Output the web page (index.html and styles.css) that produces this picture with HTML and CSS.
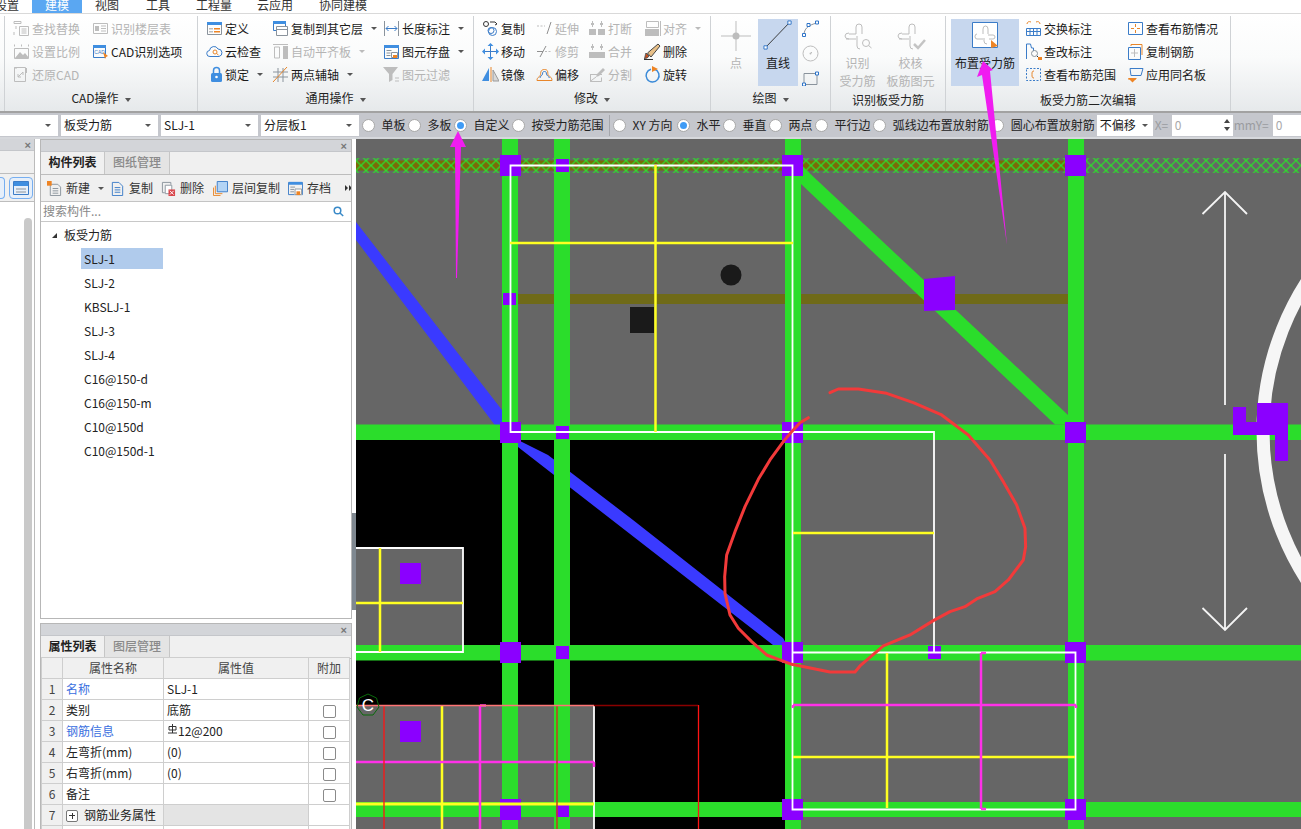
FILE: index.html
```html
<!DOCTYPE html>
<html lang="zh-CN">
<head>
<meta charset="utf-8">
<title>板受力筋</title>
<link rel="stylesheet" href="styles.css">
</head>
<body>
<div class="app">
  <nav class="menu">
    <span class="m m0">设置</span><span class="m m1 on">建模</span><span class="m m2">视图</span><span class="m m3">工具</span><span class="m m4">工程量</span><span class="m m5">云应用</span><span class="m m6">协同建模</span>
  </nav>

  <div class="ribbon">
    <section class="group g1">
      <div class="gbody">
        <div class="col c1a">
          <div class="tool off"><svg class="ic" viewBox="0 0 17 17"><path class="g" d="M1 1.500h7v2H1zM6.500 6.500h9v9h-9zM8.500 9h5M8.500 11h5M8.500 13h5M3 6v3M1 12v3"/></svg>查找替换</div>
          <div class="tool off"><svg class="ic" viewBox="0 0 17 17"><path class="g" d="M1.500 1.500v2M15.500 1.500v2M8.500 1.500v2"/><path class="g" d="M1.500 5.500h14v10h-14z"/><path class="gf" d="M2 15l5-6 3 3 2-2 4 5z"/></svg>设置比例</div>
          <div class="tool off"><svg class="ic" viewBox="0 0 17 17"><path class="g" d="M1.500 1.500h11v14h-11zM13.500 2v5M1 2h3M5 11l5-5M5 8v3h3M10 6v3"/></svg>还原CAD</div>
        </div>
        <div class="col">
          <div class="tool off"><svg class="ic" viewBox="0 0 17 17"><path class="g" d="M1.500 3.500h14v10h-14z"/><path class="gf" d="M3 6h4v5H3z"/><path class="g" d="M9 6h5M9 8.500h5M9 11h5"/></svg>识别楼层表</div>
          <div class="tool"><svg class="ic" viewBox="0 0 17 17"><path class="bl" d="M1.500 2.500h12v12h-12z"/><path class="bf" d="M1 2h13v3H1z"/><text class="tiny" x="2.300" y="11">CAD</text><path class="of" d="M11 9l5 4-2 1-1 2z"/></svg>CAD识别选项</div>
        </div>
      </div>
      <h4 class="gt">CAD操作<i class="caret wide"></i></h4>
    </section>

    <section class="group g2">
      <div class="gbody">
        <div class="col c2a">
          <div class="tool"><svg class="ic" viewBox="0 0 17 17"><path class="ln" d="M1.500 2.500h14v12h-14z"/><path class="bf" d="M1 2h15v3H1z"/><path class="of" d="M8 8h6v1.500H8zM8 11h6v1.500H8z"/><path class="gf" d="M3 8h4v1.500H3zM3 11h4v1.500H3z"/></svg>定义</div>
          <div class="tool"><svg class="ic" viewBox="0 0 17 17"><path class="bl" d="M4 13.500a3 3 0 0 1-.5-6 4.500 4.500 0 0 1 8.500-1.500 3.800 3.800 0 0 1 1 7.500z"/><circle class="or" cx="9" cy="9" r="2"/><path class="or" d="M10.500 10.500l2 1.500"/></svg>云检查</div>
          <div class="tool ind"><svg class="ic n" viewBox="0 0 13 17"><path class="lk" d="M3.500 7V4.500a3 3 0 0 1 6 0V7"/><rect class="bf" x="1" y="7" width="11" height="9" rx="1.500"/><circle class="wf" cx="6.500" cy="11" r="1.300"/></svg>锁定<i class="caret"></i></div>
        </div>
        <div class="col c2b">
          <div class="tool"><svg class="ic" viewBox="0 0 17 17"><path class="bl" d="M1.500 1.500h12v9h-12z"/><path class="bf" d="M1 1h13v3H1z"/><path class="wf" d="M4 6h12v10H4z"/><path class="ln" d="M4.500 6.500h11v9h-11zM4.500 9.500h11"/></svg>复制到其它层<i class="caret"></i></div>
          <div class="tool off"><svg class="ic" viewBox="0 0 17 17"><path class="g" d="M1 1.500h15M2.500 4v11h5V4z"/><path class="gf" d="M11 3h5v13h-5z"/></svg>自动平齐板<i class="caret dim"></i></div>
          <div class="tool"><svg class="ic" viewBox="0 0 17 17"><path class="ln" d="M1 6h15M1 11h15M6 2v14M11 2v14"/><path class="or" d="M1 16L15 1"/></svg>两点辅轴<i class="caret"></i></div>
        </div>
        <div class="col">
          <div class="tool"><svg class="ic" viewBox="0 0 17 17"><path class="ln" d="M1.500 1v15M15.500 1v15"/><path class="bl" d="M3 8.500h11M5.500 6L3 8.500 5.500 11M11.500 6L14 8.500 11.500 11"/></svg>长度标注<i class="caret"></i></div>
          <div class="tool"><svg class="ic" viewBox="0 0 17 17"><path class="bl" d="M1.500 2.500h14v13h-14z"/><path class="bf" d="M1 2h15v3H1z"/><path class="ln" d="M3.500 7.500h5M3.500 10h4M3.500 12.500h4"/><path class="wf" d="M8 9h7v6H8z"/><path class="ln" d="M8.500 9.500h6v5h-6z"/><path class="of" d="M10 12h4v3h-4z"/></svg>图元存盘<i class="caret"></i></div>
          <div class="tool off"><svg class="ic" viewBox="0 0 17 17"><path class="gf" d="M0 1h15L9.500 8v6L6 16V8z"/><path class="g" d="M12 12h4M12 15h4"/></svg>图元过滤</div>
        </div>
      </div>
      <h4 class="gt">通用操作<i class="caret wide"></i></h4>
    </section>

    <section class="group g3">
      <div class="gbody">
        <div class="col c3a">
          <div class="tool"><svg class="ic" viewBox="0 0 17 17"><circle class="dk" cx="4" cy="4" r="2.500"/><path class="dk" d="M8 2h5l2 2-2 1"/><circle class="bl" cx="10.500" cy="11.500" r="4"/><circle class="bl" cx="9" cy="10.500" r="3"/></svg>复制</div>
          <div class="tool"><svg class="ic" viewBox="0 0 17 17"><path class="bl" d="M8.500 3v11M3 8.500h11"/><path class="bf" d="M8.500 0l3 3h-6zM8.500 17l-3-3h6zM0 8.500l3-3v6zM17 8.500l-3 3v-6z"/></svg>移动</div>
          <div class="tool"><svg class="ic" viewBox="0 0 17 17"><path class="bf" d="M7 2v13H0z"/><path class="gf2" d="M11 4v11h6z"/><path class="or" d="M9 1v15"/></svg>镜像</div>
        </div>
        <div class="col c3b">
          <div class="tool off"><svg class="ic" viewBox="0 0 17 17"><path class="g dash" d="M1 6h8"/><path class="gd" d="M11 14L15 2"/></svg>延伸</div>
          <div class="tool off"><svg class="ic" viewBox="0 0 17 17"><path class="gd" d="M1 8.500h6M4 14L10 3"/><path class="g dash" d="M9 8.500h7"/></svg>修剪</div>
          <div class="tool"><svg class="ic" viewBox="0 0 17 17"><path class="or" d="M1 14.500c0-4 3-3 3.500-6 .3-2 0-5 4-5s3 3 3.500 5c.5 2 4 2 4 6z"/><path class="bl" d="M4 12c0-2 2-2 2.500-4 .3-1.500 0-2.500 2-2.500s1.500 1 2 2.500c.5 2 2 2 3 4"/></svg>偏移</div>
        </div>
        <div class="col c3c">
          <div class="tool off"><svg class="ic" viewBox="0 0 17 17"><path class="gf" d="M0 9h7v6H0zM9 9h7v6H9zM2 3h3v2H2zM11 3h3v2h-3z"/><path class="g" d="M3.500 1v6M12.500 1v6"/></svg>打断</div>
          <div class="tool off"><svg class="ic" viewBox="0 0 17 17"><path class="gf" d="M0 9h16v6H0zM2 3h3v2H2zM11 3h3v2h-3z"/><path class="g" d="M3.500 1v6M12.500 1v6"/></svg>合并</div>
          <div class="tool off"><svg class="ic" viewBox="0 0 17 17"><path class="g" d="M1 8.500h12M1.500 8.500v7h11v-4M1 15.500L7 11"/><path class="gf" d="M8 8l6-6 2 2-6 6-3 1z"/></svg>分割</div>
        </div>
        <div class="col">
          <div class="tool off"><svg class="ic" viewBox="0 0 17 17"><path class="g" d="M2.500 1.500h12v6h-12z"/><path class="gf" d="M1 9h14v7H1z"/><path class="g" d="M16.500 1v15"/></svg>对齐<i class="caret dim"></i></div>
          <div class="tool"><svg class="ic" viewBox="0 0 17 17"><path class="dk" d="M0 16.500h9"/><path class="of2" d="M2 10l3 3c-1 2-3 2.500-5 2.500 1.500-1 1-4 2-5.500z"/><path class="tan" d="M3.500 10L14 1l2 2-9 11z"/></svg>删除</div>
          <div class="tool"><svg class="ic" viewBox="0 0 17 17"><path class="blt" d="M7 3.200a6.500 6.500 0 1 0 3.500.1"/><path class="of" d="M8 0l6 3-6 3z"/></svg>旋转</div>
        </div>
      </div>
      <h4 class="gt">修改<i class="caret wide"></i></h4>
    </section>

    <section class="group g4">
      <div class="gbody">
        <div class="big dot off"><svg class="bigic" viewBox="0 0 30 30"><path class="g" d="M0 15h30M15 0v30"/><circle class="gf" cx="15" cy="15" r="3.500"/></svg><span>点</span></div>
        <div class="big line on"><svg class="bigic" viewBox="0 0 30 32"><path class="dk" d="M2 29L27 3"/><path class="sq" d="M0 27.500h3.500V31H0zM25.500 1H29v3.500h-3.500z"/></svg><span>直线</span></div>
        <div class="mini">
          <svg class="ic" viewBox="0 0 17 17"><path class="ln" d="M2 15c0-6 4-10 13-12"/><path class="sq" d="M.5 13.500h3v3h-3zM5 3.500h3v3H5zM13.500 1h3v3h-3z"/></svg>
          <svg class="ic" viewBox="0 0 17 17"><circle class="g" cx="8.500" cy="8.500" r="7.500"/><path class="g" d="M10 7l-1 1"/><circle class="gf" cx="8.500" cy="8.500" r="1"/></svg>
          <svg class="ic" viewBox="0 0 17 17"><path class="ln" d="M2 4.500h13v11H2z"/><path class="sq" d="M.5 14h3v3h-3zM13.500 3h3v3h-3z"/></svg>
        </div>
      </div>
      <h4 class="gt">绘图<i class="caret wide"></i></h4>
    </section>

    <section class="group g5">
      <div class="gbody">
        <div class="big rec off"><svg class="bigic" viewBox="0 0 30 30"><path class="g" d="M13 12V5q0-3 3-3t3 3v7M3 17h10M6 11q-4 0-4 3t4 3M13 12h-7M14 14v10q0 3 3 3"/><circle class="g" cx="23" cy="21" r="3.500"/><path class="g" d="M25.500 23.500l3 2.500"/></svg><span>识别<br>受力筋</span></div>
        <div class="big rec off"><svg class="bigic" viewBox="0 0 30 30"><path class="g" d="M13 12V5q0-3 3-3t3 3v7M3 17h10M6 11q-4 0-4 3t4 3M13 12h-7M14 14v10q0 3 3 3"/><path class="gd2" d="M18 22l4 4 7-8"/></svg><span>校核<br>板筋图元</span></div>
      </div>
      <h4 class="gt plain">识别板受力筋</h4>
    </section>

    <section class="group g6">
      <div class="gbody">
        <div class="big place on"><svg class="bigic fr" viewBox="0 0 26 26"><path class="frame" d="M.5.500h25v25H.500z"/><path class="g" d="M11 12V7q0-3 2.500-3T16 7v5M5 12q-2 0-2 2.500T5 17h6M16 13h5q2 0 2 2t-2 2h-4M12 16v3q0 3 3 3"/><path class="of" d="M19 18l7 6-7 2z"/></svg><span>布置受力筋</span></div>
        <div class="col c6a">
          <div class="tool"><svg class="ic" viewBox="0 0 17 17"><path class="or" d="M2 4c0-2 2-3 4-2M15 4c0-2-2-3-4-2"/><path class="bl" d="M1.500 8.500h14v7h-14zM1.500 11.500h14M5 8.500v7M8.500 8.500v7M12 8.500v7"/></svg>交换标注</div>
          <div class="tool"><svg class="ic" viewBox="0 0 17 17"><path class="bl" d="M1.500 1h4l1 4h2v3M1.500 1v15"/><circle class="ln" cx="9.500" cy="10.500" r="3"/><path class="dk" d="M12 13l2 2"/><path class="of" d="M13 14h4v3h-4z"/></svg>查改标注</div>
          <div class="tool"><svg class="ic" viewBox="0 0 17 17"><path class="bl dash" d="M1.500 2.500h14v12h-14z"/><path class="or" d="M9 5c-2 0-2 1-2 3.500S7 12 9 12"/></svg>查看布筋范围</div>
        </div>
        <div class="col">
          <div class="tool"><svg class="ic" viewBox="0 0 17 17"><path class="bl" d="M1.500 2.500h14v12h-14z"/><path class="or" d="M8.500 4v3M8.500 10v3M4 8.500h3M10 8.500h3"/></svg>查看布筋情况</div>
          <div class="tool"><svg class="ic" viewBox="0 0 17 17"><path class="or" d="M4 3V1.500h11V12"/><path class="bl" d="M1.500 4.500h12v12h-12z"/><path class="g" d="M7.500 6v8M4 10h7"/></svg>复制钢筋</div>
          <div class="tool"><svg class="ic" viewBox="0 0 17 17"><path class="bl" d="M3 2.500h13l-2 7H4z"/><path class="or" d="M1 13h8"/><path class="of" d="M1 12h9l-4.500 4.500z"/></svg>应用同名板</div>
        </div>
      </div>
      <h4 class="gt plain">板受力筋二次编辑</h4>
    </section>
  </div>

  <div class="optbar">
    <div class="sel s0"><i class="caret"></i></div>
    <div class="sel s1">板受力筋<i class="caret"></i></div>
    <div class="sel s1">SLJ-1<i class="caret"></i></div>
    <div class="sel s2">分层板1<i class="caret"></i></div>
    <div class="opts">
      <label class="opt"><i class="radio"></i>单板</label>
      <label class="opt"><i class="radio"></i>多板</label>
      <label class="opt"><i class="radio sel-on"></i>自定义</label>
      <label class="opt"><i class="radio"></i>按受力筋范围</label>
      <span class="vsep"></span>
      <label class="opt xy"><i class="radio"></i><span class="xyt">XY 方向</span></label>
      <label class="opt"><i class="radio sel-on"></i>水平</label>
      <label class="opt"><i class="radio"></i>垂直</label>
      <label class="opt"><i class="radio"></i>两点</label>
      <label class="opt"><i class="radio"></i>平行边</label>
      <label class="opt"><i class="radio"></i>弧线边布置放射筋</label>
      <label class="opt"><i class="radio"></i>圆心布置放射筋</label>
    </div>
    <div class="sel s3">不偏移<i class="caret"></i></div>
    <span class="lab lx">X=</span>
    <div class="num nx">0<span class="spin"><i class="up"></i><i class="dn"></i></span></div>
    <span class="lab ly">mmY=</span>
    <div class="num ny">0</div>
  </div>

  <div class="main">
    <aside class="sliver">
      <div class="phead short"><span class="x">×</span></div>
      <div class="stabs"></div>
      <div class="stool"><i class="sb a"></i><i class="sb b"><svg viewBox="0 0 16 14" class="sbi"><path class="bl" d="M.5.500h15v13H.500z"/><path class="bf" d="M1 1h14v4H1z"/><path class="ln" d="M3 8h10M3 11h10"/></svg></i></div>
      <div class="sscroll"><i class="thumb"></i></div>
    </aside>

    <div class="panels">
      <section class="panel top">
        <div class="phead"><span class="x">×</span></div>
        <div class="tabs"><span class="tab act">构件列表</span><span class="tab">图纸管理</span></div>
        <div class="ptool">
          <span class="pt t1"><svg class="pi" viewBox="0 0 16 16"><path class="ln" d="M3.500 3.500h8l3 3v9h-11z"/><path class="ln" d="M6 8h6M6 10.500h6M6 13h6"/><path class="of" d="M0 0h5v5H0z"/></svg>新建<i class="caret"></i></span>
          <span class="pt t2"><svg class="pi" viewBox="0 0 16 16"><path class="bl" d="M2.500 1.500h7l4 4v10h-11z"/><path class="bl" d="M5 7h6M5 9.500h6M5 12h6"/></svg>复制</span>
          <span class="pt t3"><svg class="pi" viewBox="0 0 16 16"><path class="ln" d="M1.500 1.500h9v11h-9z"/><path class="wf" d="M4 4h8v10H4z"/><path class="ln" d="M4.500 4.500h7v9h-7z"/><path class="rf" d="M8 9h7v7H8z"/><path class="wl" d="M9.500 10.500l4 4M13.500 10.500l-4 4"/></svg>删除</span>
          <span class="pt t4"><svg class="pi" viewBox="0 0 16 16"><path class="or" d="M.5 7v8.500H8M2.500 5v8.500H10"/><path class="sky" d="M4.500.5h11v11h-11z"/></svg>层间复制</span>
          <span class="pt t5"><svg class="pi" viewBox="0 0 16 16"><path class="bl" d="M.5 1.500h15v13H.5z"/><path class="bf" d="M1 1h14v3H1z"/><path class="ln" d="M2.500 6.500h5M2.500 9h4M2.500 11.500h4"/><path class="wf" d="M7 8h8v7H7z"/><path class="ln" d="M7.500 8.500h7v6h-7z"/><path class="of" d="M9 11h4v4H9z"/></svg>存档</span>
          <span class="more"></span>
        </div>
        <div class="search"><span>搜索构件...</span><svg class="mag" viewBox="0 0 11 11"><circle class="blk" cx="4.500" cy="4.500" r="3.300"/><path class="blk" d="M7 7l3.200 3"/></svg></div>
        <div class="tree">
          <div class="root"><i class="tri"></i>板受力筋</div>
          <div class="leaf cur">SLJ-1</div>
          <div class="leaf">SLJ-2</div>
          <div class="leaf">KBSLJ-1</div>
          <div class="leaf">SLJ-3</div>
          <div class="leaf">SLJ-4</div>
          <div class="leaf">C16@150-d</div>
          <div class="leaf">C16@150-m</div>
          <div class="leaf">C10@150d</div>
          <div class="leaf">C10@150d-1</div>
        </div>
      </section>

      <section class="panel bottom">
        <div class="phead"><span class="x">×</span></div>
        <div class="tabs"><span class="tab act">属性列表</span><span class="tab">图层管理</span></div>
        <table class="props">
          <colgroup><col class="k0"><col class="k1"><col class="k2"><col class="k3"></colgroup>
          <thead><tr><th></th><th>属性名称</th><th>属性值</th><th>附加</th></tr></thead>
          <tbody>
            <tr><td class="n">1</td><td class="link">名称</td><td>SLJ-1</td><td></td></tr>
            <tr><td class="n">2</td><td>类别</td><td>底筋</td><td><i class="chk"></i></td></tr>
            <tr><td class="n">3</td><td class="link">钢筋信息</td><td><svg class="rebar" viewBox="0 0 9 10"><path class="dk" d="M4.500 0v9M1 2.500h7v3.500H1zM0 9h9"/></svg>12@200</td><td><i class="chk"></i></td></tr>
            <tr><td class="n">4</td><td>左弯折(mm)</td><td>(0)</td><td><i class="chk"></i></td></tr>
            <tr><td class="n">5</td><td>右弯折(mm)</td><td>(0)</td><td><i class="chk"></i></td></tr>
            <tr><td class="n">6</td><td>备注</td><td></td><td><i class="chk"></i></td></tr>
            <tr><td class="n">7</td><td class="grp"><i class="plus"></i>钢筋业务属性</td><td class="fill"></td><td></td></tr>
            <tr><td class="n"></td><td></td><td></td><td></td></tr>
          </tbody>
        </table>
      </section>
    </div>

    <div class="split"><i class="grip"></i></div>

    <div class="canvas">
      <svg class="draw" viewBox="356 139 945 690">
        <defs>
          <pattern id="hatch" width="10" height="10" patternUnits="userSpaceOnUse" x="356" y="160.500">
            <path class="hx" d="M0 0L10 10M10 0L0 10"/>
          </pattern>
        </defs>
        <rect class="cv-gray" x="356" y="139" width="945" height="690"/>
        <path class="cv-black" d="M356 440H786V829H356z"/>
        <path class="cv-gray" d="M356 548H463V652H356zM356 705H594V829H356z"/>

        <path class="ochre" d="M356 160.500H1068V170.500H356z"/>
        <rect class="hbar" x="356" y="158" width="945" height="15" fill="url(#hatch)"/>
        <path class="olive" d="M510 294H1068V304H510z"/>
        <path class="blue" d="M356 222L502 410 520 441 548 455 633 520 783 638 790 650 773 645 612 520 518 447 500 432 356 240z"/>

        <path class="beam" d="M502 139H518V829H502zM554 139H570V829H554zM785 139H801V829H785zM1068 139H1084V829H1068zM356 424.500H1301V440H356zM356 645H1301V660.500H356zM356 802H1301V817H356z"/>
        <path class="beam" d="M801 167L803 167 1068 415V424.500H1055L801 184z"/>

        <circle class="ring" cx="1538" cy="431" r="275"/>

        <path class="pur" d="M500 155h21v21h-21zM782 155h21v21h-21zM1065 155h21v21h-21zM500 422h21v21h-21zM782 422h21v21h-21zM1065 422h21v21h-21zM500 642h21v21h-21zM782 642h21v21h-21zM1065 642h21v21h-21zM500 799h21v21h-21zM782 799h21v21h-21zM1065 799h21v21h-21z"/>
        <path class="pur" d="M556 159h13v13h-13zM503 293h13v12h-13zM556 426h13v13h-13zM556 646h13v13h-13zM556 805h13v12h-13zM928 646h13v13h-13z"/>
        <path class="pur" d="M924 279L955 276V310L924 311zM400 563h21v21h-21zM400 721h21v21h-21zM1233 407H1246V422H1257V403H1288V461H1275V435H1233z"/>

        <path class="dark" d="M630 307h24v26h-24z"/>
        <circle class="dark" cx="731" cy="275" r="10.500"/>

        <path class="arrow" d="M1225 405V192M1202.500 214L1225 192 1247 214M1225 454V630M1202.500 608L1225 630 1247 608"/>

        <path class="wire" d="M510.500 165.500H792.500V432H510.500zM792.500 432H934V652M792.500 432V810M792.500 652.500H1075.500V809.500H792.500zM356 548H463V652H356M594 705V829"/>
        <path class="yel" d="M510 243H793M655.500 165V432M793 533H934M887 653V808M793 757H1075M380 548V652M356 603H463M442 706V829"/>
        <path class="yel thick" d="M356 804H594"/>
        <path class="mag-l" d="M981 653V809M793 705H1076M480 706V829M356 762H594M793 705v3M1076 705v3M981 653h5M981 809h5M480 705.500h6M594 762v5"/>
        <path class="red" d="M384 705V829M698.500 705V829"/>
        <path class="red-d" d="M557 705V829"/>
        <path class="maroon" d="M594 705.500H698"/>
        <path class="pink" d="M356 705.500H594"/>

        <path class="cir" d="M368 694L376.500 698 379 707 373 715 363 715 357 707 359.500 698z"/>
        <text class="c-mark" x="368" y="711">C</text>

        <g transform="translate(720 380) scale(.3333)">
          <path class="scrib" d="M265 113L240 128 215 155 190 185 150 240 115 298 75 380 45 455 20 525 14 590 15 640 30 705 55 745 95 785 140 825 215 853 330 876 405 876 420 858 490 798 570 765 640 722 690 695 735 680 770 657 825 635 865 600 910 540 917 500 915 445 890 375 850 305 810 240 745 165 665 105 580 68 500 40 415 27 355 27 330 38"/>
        </g>
      </svg>
    </div>
  </div>

  <svg class="over" viewBox="0 0 1301 829">
    <path class="anno" d="M458 131L466 147H461L457 278H456L455 147H450z"/>
    <path class="anno" d="M983 61L993 70 990 71 1007 245 982 75 977 77z"/>
  </svg>
</div>
</body>
</html>
```

FILE: styles.css
```css
* { box-sizing: border-box; }
html, body { margin: 0; padding: 0; background: #fff; }
body { font: 12px/16px "Noto Sans CJK SC", "Liberation Sans", sans-serif; color: #1a1a1a; }
i { font-style: normal; display: inline-block; }
h4 { margin: 0; font-weight: 400; font-size: 12px; }

.app { position: relative; width: 1301px; height: 829px; overflow: hidden; display: flex; flex-direction: column; }

/* menu */
.menu { height: 14px; flex: none; display: flex; background: #fff; border-bottom: 1px solid #d9d9d9; overflow: hidden; font-size: 12px; line-height: 10px; color: #333; }
.m { display: block; flex: none; height: 13px; text-align: center; white-space: nowrap; }
.m0 { width: 24px; margin-left: -5px; margin-right: 13px; }
.m1 { width: 50px; margin-right: 13px; }
.m2 { width: 24px; margin-right: 27px; }
.m3 { width: 24px; margin-right: 26px; }
.m4 { width: 36px; margin-right: 25px; }
.m5 { width: 36px; margin-right: 26px; }
.m6 { width: 48px; }
.m.on { background: #5aa7f2; color: #fff; }

/* ribbon */
.ribbon { height: 97px; flex: none; display: flex; padding-left: 4px; background: linear-gradient(#fff 0, #fafbfb 45%, #e6e9eb 100%); }
.group { height: 95px; margin-top: 2px; border-left: 1px solid #cfd2d5; display: flex; flex-direction: column; }
.g1 { width: 193px; } .g2 { width: 276px; } .g3 { width: 237px; } .g4 { width: 120px; } .g5 { width: 115px; } .g6 { width: 286px; border-right: 1px solid #cfd2d5; }
.gbody { height: 74px; padding-top: 1px; display: flex; }
.g1 .gbody { padding-left: 8px; } .g2 .gbody { padding-left: 8px; } .g3 .gbody { padding-left: 8px; }
.g4 .gbody { padding-left: 3px; } .g6 .gbody { padding-left: 5px; }
.col { display: flex; flex-direction: column; }
.c1a { width: 79px; } .c2a { width: 66px; } .c2b { width: 111px; }
.c3a { width: 54px; } .c3b { width: 53px; } .c3c { width: 55px; }
.c6a { width: 102px; margin-left: 6px; }
.tool { height: 23px; display: flex; align-items: center; gap: 2px; white-space: nowrap; }
.tool.off, .big.off { color: #b4b4b4; }
.tool.ind { padding-left: 4px; }
.ic { width: 17px; height: 17px; flex: none; display: block; }
.ic.n { width: 13px; }
.gt { height: 20px; line-height: 20px; text-align: center; color: #222; margin-top: -2px; }
.gt.plain { margin-top: 0; }
.caret { display: inline-block; width: 0; height: 0; margin-left: 6px; border: 3px solid transparent; border-top: 3.500px solid #555; border-bottom: 0; vertical-align: middle; }
.caret.dim { border-top-color: #bbb; }
.caret.wide { margin-left: 6px; border-width: 4px 3.500px 0; }

.big { display: flex; flex-direction: column; align-items: center; text-align: center; margin-top: 2px; height: 67px; line-height: 18px; }
.big.on { background: #c7d7ee; }
.big.dot { width: 44px; } .big.line { width: 40px; }
.big.rec { width: 53px; }
.big.place { width: 68px; }
.bigic { width: 30px; height: 30px; margin-top: 2px; margin-bottom: 3px; flex: none; }
.line .bigic { margin-top: 1px; margin-bottom: 4px; }
.rec .bigic { margin-top: 3px; margin-bottom: 2px; }
.fr { width: 26px; height: 26px; margin-top: 3px; margin-bottom: 6px; }
.mini { margin-left: 4px; margin-top: 2px; height: 67px; display: flex; flex-direction: column; justify-content: space-between; padding-top: 1px; }

/* svg helpers */
svg path, svg circle { fill: none; stroke-width: 1; }
svg .g { stroke: #bdbdbd; }
svg .gd { stroke: #8f8f8f; }
svg .gd2 { stroke: #c4c4c4; stroke-width: 2.500; }
svg .gf { fill: #bdbdbd; stroke: none; }
svg .gf2 { fill: #d8d8d8; stroke: #999; }
svg .bl { stroke: #3b7cc8; }
svg .frame { stroke: #3b7cc8; fill: #fff; }
svg .blt { stroke: #3b8ad8; stroke-width: 1.500; }
svg .bf { fill: #3f8ee0; stroke: none; }
svg .or { stroke: #e8862a; }
svg .of { fill: #ee8424; stroke: none; }
svg .of2 { fill: #c8501e; stroke: #555; }
svg .tan { fill: #e8c088; stroke: #444; }
svg .ln { stroke: #8a939c; }
svg .dk { stroke: #333; }
svg .lk { stroke: #3f8ee0; stroke-width: 1.500; }
svg .wf { fill: #fff; stroke: none; }
svg .wl { stroke: #fff; }
svg .rf { fill: #d8464c; stroke: none; }
svg .sky { fill: #b3d4f5; stroke: #3b7cc8; }
svg .sq { stroke: #2f74c8; fill: #fff; }
svg .blk { stroke: #3a8ac8; stroke-width: 1.500; }
svg .dash { stroke-dasharray: 2 1.500; }
svg .tiny { font: 5px "Liberation Sans", sans-serif; fill: #3b7cc8; }

/* option bar */
.optbar { height: 28px; flex: none; display: flex; align-items: center; background: #c5c7cd; border-top: 2px solid #a2a2a2; border-bottom: 2px solid #d6d8dc; }
.optbar > * { flex: none; }
.sel { height: 21px; background: #fff; display: flex; align-items: center; justify-content: space-between; padding: 0 7px 0 3px; margin-right: 3px; font-size: 12px; white-space: nowrap; }
.s0 { width: 58px; justify-content: flex-end; } .s1 { width: 97px; } .s2 { width: 98px; margin-right: 0; }
.s3 { width: 56px; margin-left: 0; margin-right: 2px; padding-left: 3px; }
.opts { display: flex; align-items: center; margin-left: 2.500px; }
.opt { display: flex; align-items: center; gap: 7px; margin-right: 2px; color: #222; white-space: nowrap; }
.radio { width: 13px; height: 13px; border-radius: 50%; background: #fff; border: 1px solid #a8a8a8; position: relative; }
.radio.sel-on::after { content: ""; position: absolute; left: 2px; top: 2px; width: 7px; height: 7px; border-radius: 50%; background: #3f9bf5; }
.vsep { width: 1px; height: 21px; background: #a5a7ac; margin: 0 3px 0 3px; }
.xyt { width: 42px; }
.lab { color: #9a9ca0; font-size: 12px; }
.lx { width: 17px; } .ly { width: 38px; margin-left: 1px; }
.num { height: 21px; background: #fff; color: #aaa; padding: 0 3px; display: flex; align-items: center; justify-content: space-between; font-size: 12px; }
.nx { width: 61px; } .ny { width: 29px; margin-left: 1px; }
.spin { display: flex; flex-direction: column; gap: 4px; }
.up, .dn { width: 0; height: 0; border: 3px solid transparent; }
.up { border-top: 0; border-bottom: 4px solid #444; }
.dn { border-bottom: 0; border-top: 4px solid #444; }

/* main */
.main { flex: 1; min-height: 0; display: flex; }
.sliver { width: 35px; flex: none; display: flex; flex-direction: column; border-right: 1px solid #bbb; }
.phead { height: 12px; flex: none; background: #d3d5d9; display: flex; justify-content: flex-end; align-items: center; padding-right: 4px; border-bottom: 1px solid #c4c6ca; }
.phead.short { padding-right: 3px; }
.x { font: 700 11px/10px "Liberation Sans", sans-serif; color: #777; }
.stabs { height: 23px; background: #f0f0f0; border-bottom: 1px solid #bdbdbd; }
.stool { height: 28px; background: #f0f0f0; border-bottom: 1px solid #bdbdbd; display: flex; justify-content: flex-end; align-items: center; gap: 4px; padding-right: 1px; overflow: hidden; }
.sb { height: 22px; border: 1px solid #76aef0; border-radius: 4px; background: #e6effa; display: flex; align-items: center; justify-content: center; flex: none; }
.sb.a { width: 6px; border-left: 0; border-radius: 0 4px 4px 0; }
.sb.b { width: 24px; }
.sbi { width: 16px; height: 14px; }
.sscroll { flex: 1; display: flex; justify-content: flex-end; padding: 16px 2px 0 0; }
.thumb { width: 8px; height: 100%; background: #c9c9c9; border-radius: 4px 4px 0 0; }

.panels { width: 312px; margin-left: 5px; flex: none; display: flex; flex-direction: column; gap: 4px; }
.panel { border: 1px solid #b7b7b7; border-bottom: 0; background: #fff; display: flex; flex-direction: column; overflow: hidden; }
.panel.top { height: 480px; border-bottom: 1px solid #b7b7b7; }
.panel.bottom { height: 206px; background: #f0f0f0; }
.tabs { height: 23px; flex: none; display: flex; background: #f0f0f0; border-bottom: 1px solid #bdbdbd; }
.tab { width: 65px; text-align: center; line-height: 20px; color: #8a8a8a; background: #e4e4e4; border: 1px solid #c6c6c6; border-width: 0 1px 0 0; font-weight: 500; }
.tab.act { width: 64px; color: #222; background: #f0f0f0; font-weight: 700; }
.ptool { height: 27px; flex: none; background: #f0f0f0; border-bottom: 1px solid #c4c4c4; display: flex; align-items: center; padding-left: 6px; color: #333; position: relative; }
.pt { display: flex; align-items: center; gap: 4px; white-space: nowrap; flex: none; }
.pi { width: 15px; height: 15px; flex: none; }
.t1 { width: 63px; } .t2 { width: 51px; } .t3 { width: 52px; } .t4 { width: 75px; } .t5 { width: 56px; }
.t1 .caret { margin-left: 4px; }
.more { display: inline-block; width: 0; height: 0; border: 3px solid transparent; border-left: 3px solid #333; margin-left: 1px; }
.more::after { content: ""; display: block; width: 0; height: 0; border: 3px solid transparent; border-left: 3px solid #333; margin: -3px 0 0 1px; }
.search { height: 20px; flex: none; display: flex; justify-content: space-between; align-items: center; padding: 0 7px 2px 2px; border-bottom: 1px solid #c8c8c8; color: #888; }
.mag { width: 11px; height: 11px; margin-top: 2px; }
.tree { flex: 1; padding-top: 1px; color: #222; }
.root { height: 25px; line-height: 24px; padding-left: 23px; position: relative; }
.tri { position: absolute; left: 11px; top: 10px; width: 0; height: 0; border-style: solid; border-width: 0 0 5px 5px; border-color: transparent transparent #333 transparent; }
.leaf { height: 24px; line-height: 22px; margin-left: 40px; padding: 0 0 0 3px; width: 82px; }
.leaf.cur { background: linear-gradient(#b0cbec 0 21px, transparent 21px); }

.props { width: 308px; border-collapse: collapse; table-layout: fixed; background: #fff; margin-top: -2px; flex: none; }
.k0 { width: 21px; } .k1 { width: 101px; } .k2 { width: 145px; } .k3 { width: 41px; }
.props th, .props td { border: 1px solid #cecece; height: 21px; padding: 0 0 2px 3px; font-weight: 400; line-height: 17px; white-space: nowrap; overflow: hidden; color: #222; }
.props th { background: #f0f0f0; color: #444; text-align: center; padding: 0 0 2px; }
.props td:last-child { text-align: center; padding: 0; }
.props td.n { background: #f0f0f0; text-align: center; padding: 0 0 2px; color: #444; }
.props td.link { color: #3a70e0; }
.props td.fill { background: #e4e4e4; }
.props td.grp { background: #f0f0f0; padding-left: 1px; }
.chk { width: 13px; height: 13px; border: 1px solid #8a8a8a; border-radius: 2px; background: #fff; vertical-align: middle; margin-top: -1px; }
.plus { width: 12px; height: 12px; border: 1px solid #777; border-radius: 2px; background: #fff; vertical-align: -2px; margin: 0 6px 0 2px; position: relative; }
.plus::before, .plus::after { content: ""; position: absolute; background: #333; }
.plus::before { left: 2px; right: 2px; top: 4.500px; height: 1px; }
.plus::after { top: 2px; bottom: 2px; left: 4.500px; width: 1px; }
.rebar { width: 9px; height: 10px; margin: 0 1px 0 1px; vertical-align: 2px; }

.split { width: 4px; flex: none; background: #fff; }
.grip { display: block; width: 4px; height: 97px; margin-top: 374px; background: #7f8890; }

.canvas { flex: 1; min-width: 0; background: #666; overflow: hidden; }
.draw { display: block; width: 945px; height: 690px; }
svg .cv-gray { fill: #666; stroke: none; }
svg .cv-black { fill: #000; stroke: none; }
svg .ochre { fill: #7a6a08; stroke: none; }
svg .hx { stroke: #2fd82f; stroke-width: 1.300; }
svg .olive { fill: #6f6a18; stroke: none; }
svg .blue { fill: #3a3aff; stroke: none; }
svg .beam { fill: #2bdd2b; stroke: none; }
svg .pur { fill: #8b00ff; stroke: none; }
svg .dark { fill: #1a1a1a; stroke: none; }
svg .ring { stroke: #f6f6f6; stroke-width: 13; }
svg .arrow { stroke: #f4f4f4; stroke-width: 1.800; }
svg .wire { stroke: #fff; stroke-width: 1.800; }
svg .yel { stroke: #ffff22; stroke-width: 2.500; }
svg .thick { stroke-width: 3; }
svg .mag-l { stroke: #ff30e8; stroke-width: 2.500; }
svg .red { stroke: #ff1414; stroke-width: 1.300; }
svg .red-d { stroke: #c43a22; stroke-width: 1.500; }
svg .maroon { stroke: #8a0000; stroke-width: 1.300; }
svg .pink { stroke: #ff7474; stroke-width: 1.500; }
svg .cir { stroke: #0a6a0a; stroke-width: 1; }
.c-mark { font: 17px "Liberation Sans", sans-serif; fill: #fff; text-anchor: middle; }
svg .scrib { stroke: #f23a3a; stroke-width: 9; stroke-linejoin: round; stroke-linecap: round; }

.over { position: absolute; left: 0; top: 0; width: 1301px; height: 829px; pointer-events: none; }
svg .anno { fill: #f01cf0; stroke: none; }
```
